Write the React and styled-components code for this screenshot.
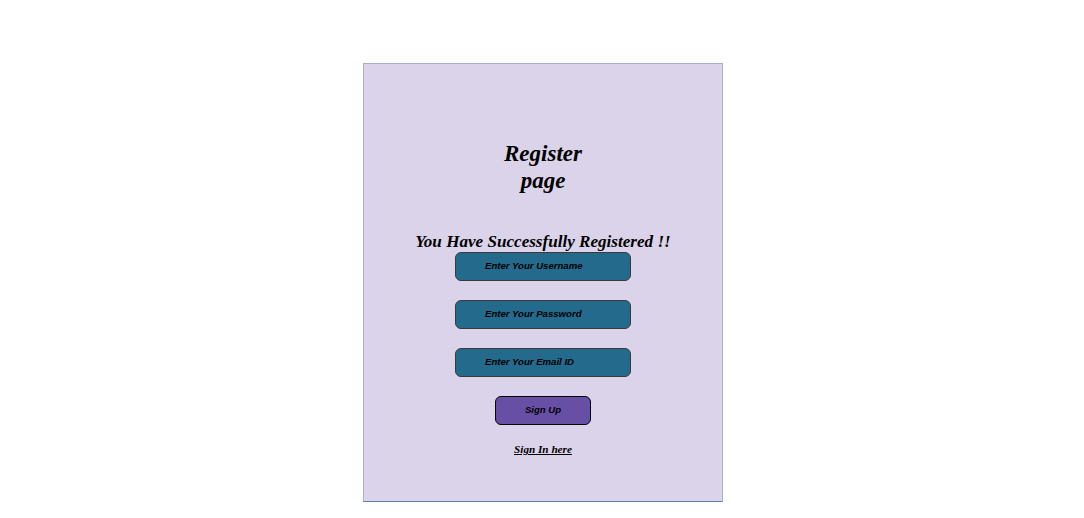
import React from 'react'
import styled, { createGlobalStyle } from 'styled-components'

const GlobalStyle = createGlobalStyle`
    body {
        margin: 0;
        background: #ffffff;
        font-family: "Liberation Serif", serif;
    }
`

function App() {
    return (
        <>
            <GlobalStyle />
            <Page>
                <Card>
                    <Title>Register page</Title>
                    <Message>You Have Successfully Registered !!</Message>
                    <Form onSubmit={e => e.preventDefault()}>
                        <Field type="text" placeholder="Enter Your Username" />
                        <Field type="password" placeholder="Enter Your Password" />
                        <Field type="email" placeholder="Enter Your Email ID" />
                        <SubmitButton type="submit">Sign Up</SubmitButton>
                    </Form>
                    <SignInLink href="#">Sign In here</SignInLink>
                </Card>
            </Page>
        </>
    )
}

export default App

const Page = styled.div`
    display: flex;
    justify-content: center;
    padding-top: 63px;
    padding-left: 2px;
`

const Card = styled.div`
    width: 360px;
    height: 439px;
    box-sizing: border-box;
    background: #dbd3e9;
    border: 1px solid #a4b2d2;
    border-bottom-color: #5b7ea8;
    display: flex;
    flex-direction: column;
    align-items: center;
    padding-top: 76px;
`

const Title = styled.h2`
    margin: 0;
    width: 110px;
    text-align: center;
    font-size: 23px;
    line-height: 27px;
    font-style: italic;
    font-weight: bold;
    color: #000;
`

const Message = styled.h3`
    margin: 38px 0 0;
    font-size: 17.1px;
    line-height: 20px;
    font-style: italic;
    font-weight: bold;
    color: #000;
    white-space: nowrap;
`

const Form = styled.form`
    display: flex;
    flex-direction: column;
    align-items: center;
    gap: 19px;
`

const Field = styled.input`
    width: 176px;
    height: 29px;
    box-sizing: border-box;
    padding: 0 0 2px 29px;
    background: #236a8d;
    border: 1px solid #3a3a3a;
    border-radius: 6px;
    font-family: "Liberation Sans", Arial, sans-serif;
    font-size: 9.6px;
    font-weight: bold;
    font-style: italic;
    outline: none;

    &::placeholder {
        color: #000;
        opacity: 1;
    }
`

const SubmitButton = styled.button`
    width: 96px;
    height: 29px;
    padding: 0 0 2px;
    background: #684fa6;
    border: 1px solid #000;
    border-radius: 6px;
    font-family: "Liberation Sans", Arial, sans-serif;
    font-size: 9.6px;
    font-weight: bold;
    font-style: italic;
    color: #000;
    cursor: pointer;
`

const SignInLink = styled.a`
    margin-top: 17px;
    font-size: 11.2px;
    line-height: 14px;
    font-weight: bold;
    font-style: italic;
    color: #000;
    text-decoration: underline;
`
